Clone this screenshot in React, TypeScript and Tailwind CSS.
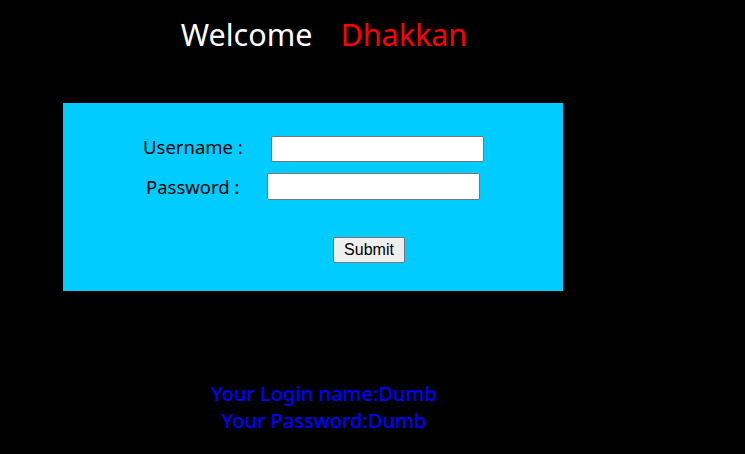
export default function App() {
  return (
    <div
      className="w-full h-[454px] bg-black overflow-hidden"
      style={{ fontFamily: '"Noto Sans", "Open Sans", sans-serif' }}
    >
      {/* Heading */}
      <div className="w-[648px] pt-[14px] flex justify-center gap-[28px] text-[30.5px] leading-[40px]">
        <span className="text-white">Welcome</span>
        <span className="text-[#ff0000]">Dhakkan</span>
      </div>

      {/* Login box */}
      <div className="ml-[63px] mt-[49px] w-[500px] h-[188px] bg-[#00ccff]">
        <div className="pt-[33px] flex items-start h-[59px]">
          <span className="ml-[80px] w-[128px] text-[18.5px] leading-[22px] text-black">Username :</span>
          <input
            type="text"
            className="w-[213px] h-[26px] bg-white border border-[#767676] rounded-[2px]"
          />
        </div>
        <div className="mt-[11px] flex items-center h-[27px]">
          <span className="ml-[83px] w-[121px] text-[18.5px] leading-[27px] text-black">Password :</span>
          <input
            type="password"
            className="w-[213px] h-[27px] bg-white border border-[#767676] rounded-[2px]"
          />
        </div>
        <div className="mt-[37px] pl-[270px] flex">
          <button
            className="w-[72px] h-[26px] bg-[#efefef] border border-[#767676] rounded-[2px] text-[16px] leading-none text-black"
            style={{ fontFamily: '"Liberation Sans", Arial, sans-serif' }}
          >
            Submit
          </button>
        </div>
      </div>

      {/* Result */}
      <div className="w-[648px] mt-[89px] text-center text-[#0000ff] text-[20px] font-medium leading-[27px]">
        <div>Your Login name:Dumb</div>
        <div>Your Password:Dumb</div>
      </div>
    </div>
  );
}
